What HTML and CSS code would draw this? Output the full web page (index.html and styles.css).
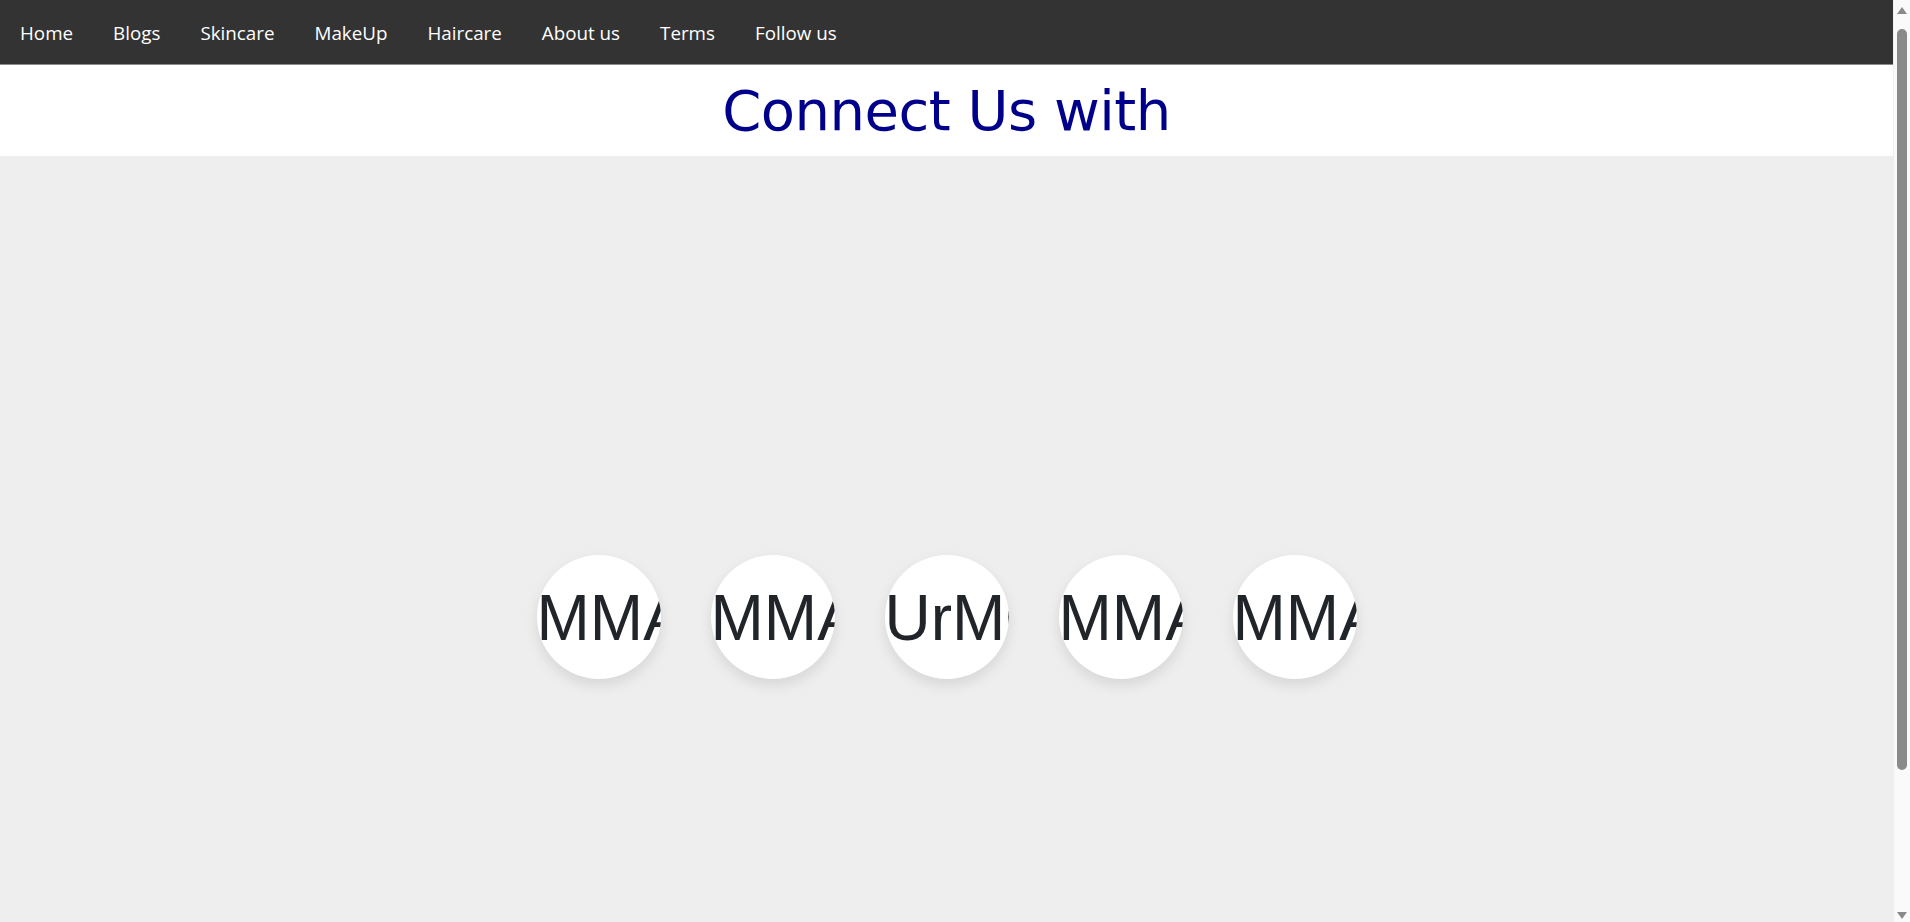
FILE: index.html
```html
<!DOCTYPE html>
<html lang="en">
<head>
<meta charset="utf-8">
<title>Connect Us with</title>
<link rel="stylesheet" href="styles.css">
</head>
<body>
<div class="page">
  <nav class="topnav">
    <a href="#">Home</a>
    <a href="#">Blogs</a>
    <a href="#">Skincare</a>
    <a href="#">MakeUp</a>
    <a href="#">Haircare</a>
    <a href="#">About us</a>
    <a href="#">Terms</a>
    <a href="#">Follow us</a>
  </nav>
  <header class="title-bar">
    <h1 class="title">Connect Us with</h1>
  </header>
  <section class="social">
    <div class="circle"><span class="label">MMAIL</span></div>
    <div class="circle"><span class="label">MMAIL</span></div>
    <div class="circle"><span class="label">UrMOBILE</span></div>
    <div class="circle"><span class="label">MMAIL</span></div>
    <div class="circle"><span class="label">MMAIL</span></div>
  </section>
  <div class="tail"></div>
</div>
<div class="rail" aria-hidden="true">
  <div class="rail-btn"><span class="arrow-up"></span></div>
  <div class="rail-track"><div class="rail-thumb"></div></div>
  <div class="rail-btn"><span class="arrow-down"></span></div>
</div>
</body>
</html>
```
FILE: styles.css
```css
html, body {
  margin: 0;
  padding: 0;
}
body {
  background: #fff;
  font-family: "Open Sans", "Noto Sans", sans-serif;
  display: flex;
  align-items: flex-start;
}
.page {
  flex: 1;
  min-width: 0;
}
.topnav {
  display: flex;
  background: #333;
  height: 64px;
  align-items: center;
  border-bottom: 1px solid #8c8c8c;
}
.topnav a {
  color: #fff;
  text-decoration: none;
  font-size: 18.8px;
  padding: 0 20px;
  line-height: 24px;
  margin-top: 2px;
}
.title-bar {
  height: 91px;
  display: flex;
  align-items: center;
  justify-content: center;
  background: #fff;
}
.title {
  margin: 0;
  font-family: "DejaVu Sans", sans-serif;
  font-weight: normal;
  font-size: 56px;
  letter-spacing: -0.5px;
  color: #00008b;
}
.social {
  height: 100vh;
  background: #eee;
  display: flex;
  align-items: center;
  justify-content: center;
  gap: 50px;
}
.circle {
  width: 124px;
  height: 124px;
  border-radius: 50%;
  background: #fff;
  overflow: hidden;
  display: flex;
  align-items: center;
  box-shadow: 0 6px 14px rgba(0, 0, 0, 0.1);
}
.label {
  font-family: "Liberation Sans", Arial, sans-serif;
  font-size: 64px;
  color: #212529;
  white-space: nowrap;
  line-height: 1;
  padding-top: 2px;
}
.tail {
  height: 28px;
}

/* scrollbar rail */
.rail {
  width: 17px;
  height: 100vh;
  flex: none;
  background: #fafafa;
  border-left: 1px solid #f0f0f0;
  box-sizing: border-box;
  display: flex;
  flex-direction: column;
}
.rail-btn {
  height: 17px;
  display: flex;
  align-items: center;
  justify-content: center;
  flex: none;
}
.arrow-up {
  width: 0;
  height: 0;
  border-left: 5px solid transparent;
  border-right: 5px solid transparent;
  border-bottom: 7px solid #8a8a8a;
  margin-top: 4px;
}
.arrow-down {
  width: 0;
  height: 0;
  border-left: 5px solid transparent;
  border-right: 5px solid transparent;
  border-top: 7px solid #8a8a8a;
  margin-top: 4px;
}
.rail-track {
  flex: 1;
  display: flex;
  justify-content: center;
  padding-top: 12px;
}
.rail-thumb {
  width: 10px;
  height: 741px;
  background: #8a8a8a;
  border-radius: 5px;
}
```
